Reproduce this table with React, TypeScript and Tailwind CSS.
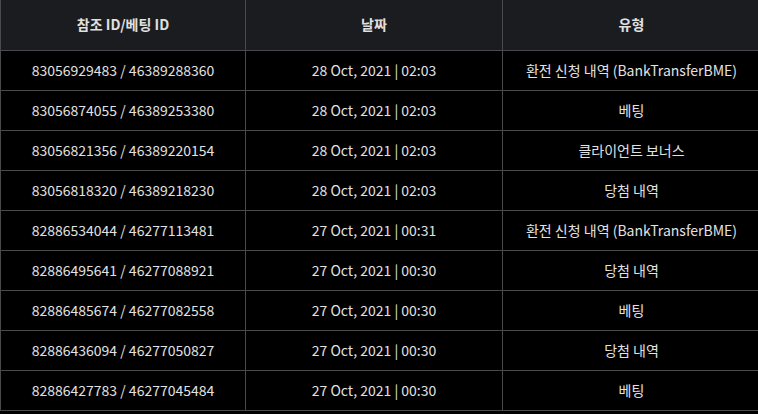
const rows = [
  { id: "83056929483 / 46389288360", date: "28 Oct, 2021 | 02:03", type: "환전 신청 내역 (BankTransferBME)" },
  { id: "83056874055 / 46389253380", date: "28 Oct, 2021 | 02:03", type: "베팅" },
  { id: "83056821356 / 46389220154", date: "28 Oct, 2021 | 02:03", type: "클라이언트 보너스" },
  { id: "83056818320 / 46389218230", date: "28 Oct, 2021 | 02:03", type: "당첨 내역" },
  { id: "82886534044 / 46277113481", date: "27 Oct, 2021 | 00:31", type: "환전 신청 내역 (BankTransferBME)" },
  { id: "82886495641 / 46277088921", date: "27 Oct, 2021 | 00:30", type: "당첨 내역" },
  { id: "82886485674 / 46277082558", date: "27 Oct, 2021 | 00:30", type: "베팅" },
  { id: "82886436094 / 46277050827", date: "27 Oct, 2021 | 00:30", type: "당첨 내역" },
  { id: "82886427783 / 46277045484", date: "27 Oct, 2021 | 00:30", type: "베팅" },
];

export default function App() {
  return (
    <div className="h-[414px] w-[758px] overflow-hidden bg-black font-['Noto_Sans_CJK_KR','Noto_Sans',sans-serif] text-[14px]">
      <table className="w-[760px] table-fixed border-collapse">
        <colgroup>
          <col className="w-[245px]" />
          <col className="w-[257px]" />
          <col className="w-[258px]" />
        </colgroup>
        <thead>
          <tr className="h-[50px] bg-[#1b1c20] text-[#e0e0e0]">
            <th className="border border-t-0 border-[#4a4a4d] font-bold">참조 ID/베팅 ID</th>
            <th className="border border-t-0 border-[#4a4a4d] font-bold">날짜</th>
            <th className="border border-t-0 border-[#4a4a4d] font-bold">유형</th>
          </tr>
        </thead>
        <tbody>
          {rows.map((r, i) => (
            <tr key={i} className="h-[40.1px] text-[#e2e2e2]">
              <td className="border border-[#4a4a4d] text-center">{r.id}</td>
              <td className="border border-[#4a4a4d] text-center">{r.date}</td>
              <td className="border border-[#4a4a4d] text-center">{r.type}</td>
            </tr>
          ))}
        </tbody>
      </table>
    </div>
  );
}
